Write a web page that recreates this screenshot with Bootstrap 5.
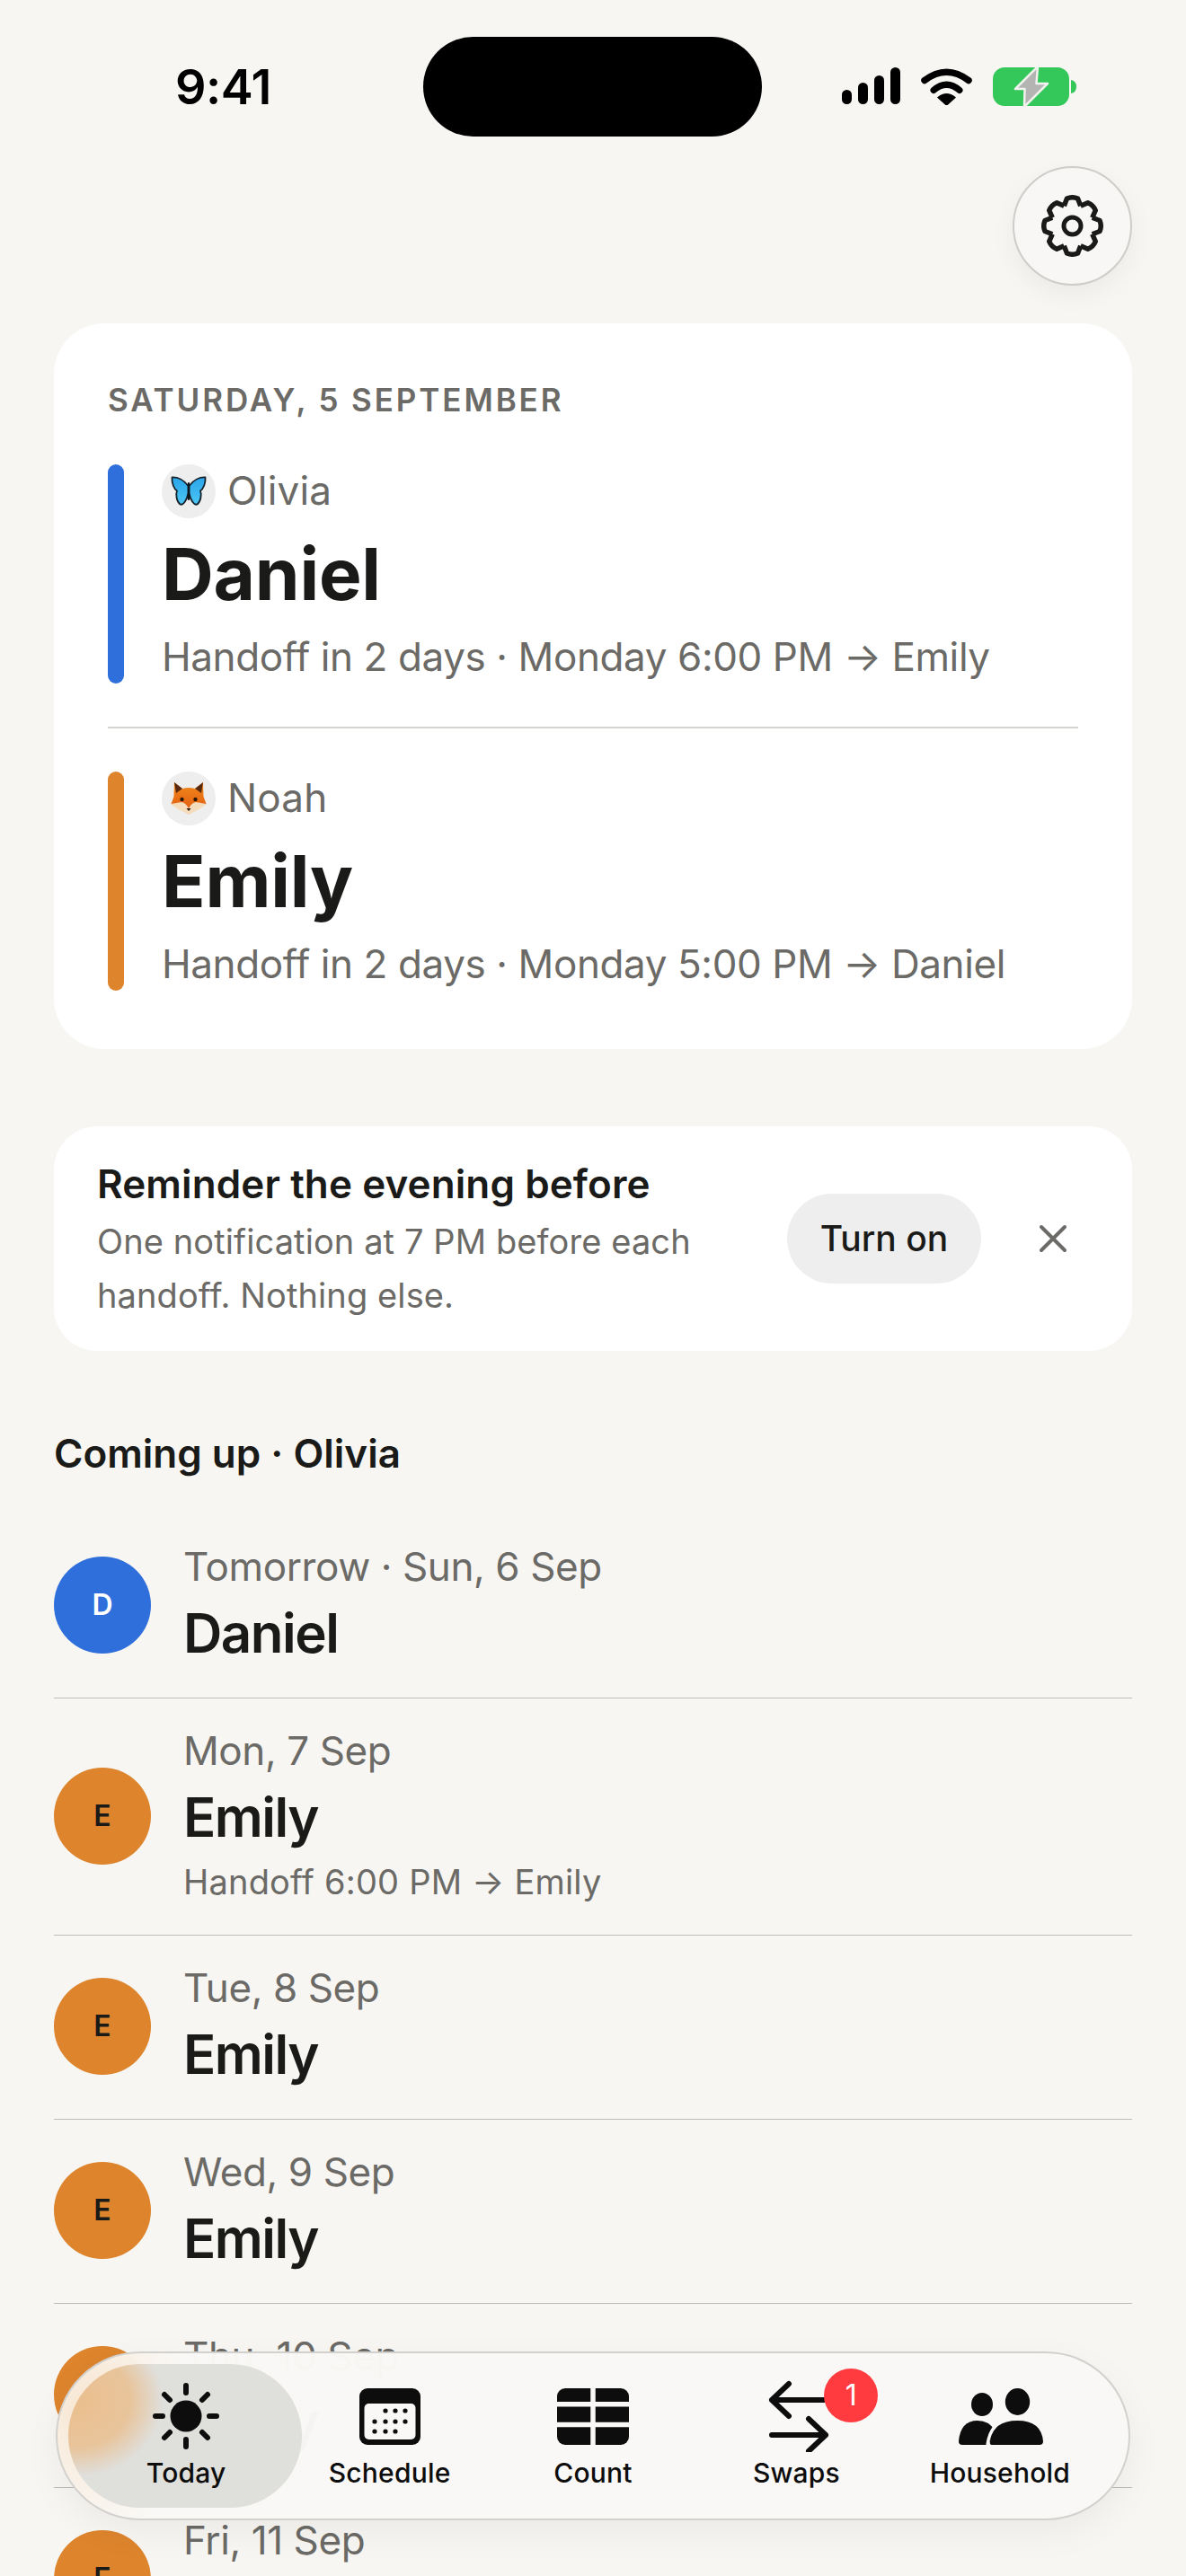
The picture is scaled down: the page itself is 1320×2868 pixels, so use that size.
<!DOCTYPE html>
<html lang="en">
  <head>
    <title>Today</title>
    <meta charset="utf-8" />
    <meta name="viewport" content="width=device-width, initial-scale=1" />
    <link
      href="https://cdn.jsdelivr.net/npm/bootstrap@5.3.3/dist/css/bootstrap.min.css"
      rel="stylesheet"
    />
    <style>
      html, body { height: 2868px; overflow: hidden; }
      body { background: #f7f6f3; color: #1a1a18; font-family: Inter, "Liberation Sans", sans-serif; }
      .phone { position: relative; width: 1320px; height: 2868px; overflow: hidden; padding: 0 60px; }

      /* status bar */
      .status-row { height: 185px; margin: 0 -60px; padding: 41px 122px 0 195px; align-items: flex-start; }
      .clock { width: 276px; font-size: 54px; line-height: 111px; font-weight: 600; color: #000; letter-spacing: -.5px; }
      .island { width: 377px; height: 111px; background: #000; border-radius: 56px; }
      .status-icons { margin-left: 89px; margin-top: 34px; gap: 23px; }

      .gear-row { height: 175px; }
      .gear-btn { width: 133px; height: 133px; padding: 0; background: #f8f7f5; border: 2px solid #cfcdc9; box-shadow: 0 10px 28px rgba(0,0,0,.05); }
      .gear-btn:hover { background: #f8f7f5; border-color: #cfcdc9; }

      /* today card */
      .hero-card { border: 0; border-radius: 56px; background: #fff; padding: 63px 60px 65px; }
      .date-label { font-size: 35px; line-height: 44px; font-weight: 600; letter-spacing: 2.900px; color: #6b6a66; margin-bottom: 50px; }
      .accent-bar { width: 18px; border-radius: 9px; flex: none; margin-right: 42px; }
      .accent-blue { background: #2f6fdb; }
      .accent-orange { background: #dd842d; }
      .kid-avatar { width: 60px; height: 60px; background: #eeeeee; }
      .kid-name { font-size: 44px; line-height: 58px; color: #6b6a66; margin-left: 13px; margin-bottom: 2px; letter-spacing: .2px; }
      .parent-name { font-size: 80px; line-height: 96px; font-weight: 700; letter-spacing: -.2px; margin-top: 14px; }
      .handoff-line { font-size: 44px; line-height: 60px; color: #6b6a66; margin-top: 14px; letter-spacing: -.4px; }
      .hero-divider { margin: 48px 0; border: 0; border-top: 2px solid #d6d5d1; opacity: 1; }

      /* reminder */
      .reminder-card { border: 0; border-radius: 48px; background: #fff; margin-top: 86px; height: 250px; padding: 4px 0 0 48px; }
      .reminder-title { font-size: 44px; line-height: 56px; font-weight: 600; letter-spacing: .1px; }
      .reminder-text { font-size: 38px; line-height: 60px; color: #6b6a66; width: 740px; margin-top: 6px; letter-spacing: .1px; }
      .turn-on { width: 216px; height: 100px; border: 0; border-radius: 50px; background: #eeeeee; color: #1a1a18; font-size: 39px; font-weight: 500; padding: 0; flex: none; margin-top: -4px; }
      .turn-on:hover { background: #eeeeee; color: #1a1a18; }
      .dismiss { width: 32px; height: 32px; padding: 0; border: 0; background: none; margin-left: 64px; margin-right: 72px; margin-top: -4px; line-height: 0; flex: none; }

      /* upcoming */
      .section-title { font-size: 44px; line-height: 56px; font-weight: 600; margin-top: 86px; margin-bottom: 40px; }
      .day-list { background: transparent; }
      .day-item { background: transparent; border-color: #bdbcb8; border-width: 0 0 2px; padding: 30px 0 32px; gap: 36px; color: inherit; }
      .day-avatar { width: 108px; height: 108px; flex: none; color: #1a1a18; font-size: 32px; font-weight: 600; }
      .day-avatar.blue { background: #2f6fdb; color: #fff; }
      .day-avatar.orange { background: #dd842d; }
      .day-date { font-size: 44px; line-height: 56px; color: #6b6a66; letter-spacing: -.4px; }
      .day-name { font-size: 60px; line-height: 80px; font-weight: 600; margin-top: 6px; letter-spacing: -1.500px; }
      .day-note { font-size: 38px; line-height: 53px; color: #6b6a66; margin-top: 6px; letter-spacing: .2px; }

      /* floating tab bar */
      .tab-bar { position: absolute; left: 62px; top: 2618px; width: 1196px; height: 188px; border-radius: 94px; padding: 0 30px;
        background:
          radial-gradient(ellipse 110px 130px at 40px 70px, rgba(245,190,125,.3), rgba(245,190,125,0) 100%),
          rgba(249,248,246,.985);
        border: 2px solid #d2d1cd; box-shadow: 0 14px 40px rgba(0,0,0,.05); }
      .tab-pill { position: absolute; left: 12px; top: 12px; width: 260px; height: 160px; border-radius: 80px;
        background:
          radial-gradient(ellipse 95px 85px at 10px 40px, rgba(238,178,112,.72) 0%, rgba(238,178,112,.6) 62%, rgba(238,178,112,0) 100%),
          #dfdfdc; }
      .tab-link { position: relative; width: 227px; height: 100%; padding: 0; color: #0d0d0d; }
      .tab-link:hover, .tab-link:focus { color: #0d0d0d; }
      .tab-icon { height: 80px; margin-top: 30px; }
      .tab-label { font-size: 30px; line-height: 40px; font-weight: 500; margin-top: 3px; letter-spacing: .2px; }
      .swap-badge { position: absolute; left: 144px; top: 17px; width: 60px; height: 60px; background: #ff3b40; color: #fff; font-size: 32px; font-weight: 400; }
      .swap-icon { margin-left: 5px; }
      .home-icon { margin-left: 3px; }
    </style>
    <script src="https://cdn.jsdelivr.net/npm/bootstrap@5.3.3/dist/js/bootstrap.bundle.min.js"></script>
  </head>
  <body>
    <div class="phone">
      <!-- status bar -->
      <div class="status-row d-flex">
        <div class="clock">9:41</div>
        <div class="island"></div>
        <div class="status-icons d-flex align-items-start">
          <svg width="65" height="42" viewBox="0 0 65 42">
            <rect x="0" y="25" width="11" height="16" rx="5.5" />
            <rect x="18" y="17" width="11" height="24" rx="5.5" />
            <rect x="36" y="9" width="11" height="32" rx="5.5" />
            <rect x="54" y="0" width="11" height="41" rx="5.5" />
          </svg>
          <svg width="57" height="42" viewBox="0 0 57 42">
            <path d="M4 14.5Q28.5 -4 53 14.5" fill="none" stroke="#000" stroke-width="7.5" stroke-linecap="round" />
            <path d="M14 25.5Q28.5 13 43 25.5" fill="none" stroke="#000" stroke-width="7" stroke-linecap="round" />
            <path d="M28.5 42L19 33.5Q28.5 26 38 33.5Z" stroke="#000" stroke-width="1.5" stroke-linejoin="round" />
          </svg>
          <svg width="93" height="44" viewBox="0 0 93 44">
            <rect x="0" y="0" width="85" height="43" rx="13" fill="#34c759" />
            <path d="M87 14Q93 15 93 21.5Q93 28 87 29Z" fill="#34c759" />
            <path d="M50 -1L25 24H35.500L35 44L61 18H48.500Z" fill="#b4b4b2" stroke="#f1f1ee" stroke-width="2.500" stroke-linejoin="round" />
          </svg>
        </div>
      </div>

      <div class="gear-row d-flex justify-content-end align-items-start">
        <button type="button" class="btn gear-btn rounded-circle d-flex align-items-center justify-content-center" aria-label="Settings">
          <svg width="69" height="69" viewBox="-34.500 -34.500 69 69" fill="none" stroke="#1a1a18" stroke-width="5.500" stroke-linejoin="round">
            <defs>
              <path id="gearTooth" d="M-9.200 -22.200L-6 -30.500Q0 -33 6 -30.500L9.200 -22.200" />
            </defs>
            <use href="#gearTooth" />
            <use href="#gearTooth" transform="rotate(45)" />
            <use href="#gearTooth" transform="rotate(90)" />
            <use href="#gearTooth" transform="rotate(135)" />
            <use href="#gearTooth" transform="rotate(180)" />
            <use href="#gearTooth" transform="rotate(225)" />
            <use href="#gearTooth" transform="rotate(270)" />
            <use href="#gearTooth" transform="rotate(315)" />
            <circle r="9.500" stroke-width="5" />
          </svg>
        </button>
      </div>

      <!-- today -->
      <div class="card hero-card">
        <div class="date-label text-uppercase">Saturday, 5 September</div>

        <div class="d-flex">
          <div class="accent-bar accent-blue"></div>
          <div>
            <div class="d-flex align-items-center">
              <div class="kid-avatar rounded-circle d-flex align-items-center justify-content-center">
                <svg width="40" height="34" viewBox="0 0 40 34">
                  <defs>
                    <linearGradient id="wingBlue" x1="0" y1="0" x2="0" y2="1">
                      <stop offset="0" stop-color="#2aa5ea" />
                      <stop offset="1" stop-color="#4cc6f5" />
                    </linearGradient>
                  </defs>
                  <path d="M19.500 11C15 5 8 1 1.500 1.500C1 8 3.500 14 7 16.500C5 21 7 29 10.500 31.500C14 33 18 27 19.500 19Z" fill="url(#wingBlue)" stroke="#14202a" stroke-width="1.800" stroke-linejoin="round" />
                  <path d="M20.500 11C25 5 32 1 38.500 1.500C39 8 36.500 14 33 16.500C35 21 33 29 29.500 31.500C26 33 22 27 20.500 19Z" fill="url(#wingBlue)" stroke="#14202a" stroke-width="1.800" stroke-linejoin="round" />
                  <path d="M20 8V26" stroke="#10161c" stroke-width="2.200" stroke-linecap="round" />
                </svg>
              </div>
              <div class="kid-name">Olivia</div>
            </div>
            <div class="parent-name">Daniel</div>
            <div class="handoff-line">Handoff in 2 days · Monday 6:00 PM → Emily</div>
          </div>
        </div>

        <hr class="hero-divider" />

        <div class="d-flex">
          <div class="accent-bar accent-orange"></div>
          <div>
            <div class="d-flex align-items-center">
              <div class="kid-avatar rounded-circle d-flex align-items-center justify-content-center">
                <svg width="40" height="36" viewBox="0 0 40 36">
                  <defs>
                    <linearGradient id="foxFur" x1="0" y1="0" x2="0" y2="1">
                      <stop offset="0" stop-color="#f08a1c" />
                      <stop offset="1" stop-color="#e2560f" />
                    </linearGradient>
                  </defs>
                  <path d="M4 0L13 7Q20 5 27 7L36 0L36.500 16L39.500 24L20 35.500L.5 24L3.500 16Z" fill="url(#foxFur)" />
                  <path d="M4 0L13 7L6 12Z M36 0L27 7L34 12Z" fill="#5a2a10" />
                  <path d="M.5 24L12 22Q17 23 20 29Q23 23 28 22L39.500 24Q34 30 20 35.500Q6 30 .5 24Z" fill="#f4dcbc" />
                  <circle cx="12.500" cy="19" r="2.200" fill="#2a1608" />
                  <circle cx="27.500" cy="19" r="2.200" fill="#2a1608" />
                  <path d="M17.500 29H22.500L20 32Z" fill="#2a1608" />
                </svg>
              </div>
              <div class="kid-name">Noah</div>
            </div>
            <div class="parent-name">Emily</div>
            <div class="handoff-line">Handoff in 2 days · Monday 5:00 PM → Daniel</div>
          </div>
        </div>
      </div>

      <!-- reminder -->
      <div class="card reminder-card flex-row align-items-center">
        <div class="flex-grow-1">
          <div class="reminder-title">Reminder the evening before</div>
          <div class="reminder-text">One notification at 7 PM before each handoff. Nothing else.</div>
        </div>
        <button type="button" class="btn turn-on">Turn on</button>
        <button type="button" class="btn dismiss" aria-label="Dismiss">
          <svg width="32" height="32" viewBox="0 0 32 32">
            <path d="M3 3L29 29M29 3L3 29" stroke="#6b6a66" stroke-width="4" stroke-linecap="round" />
          </svg>
        </button>
      </div>

      <!-- coming up -->
      <div class="section-title">Coming up · Olivia</div>
      <div class="list-group list-group-flush day-list">
        <div class="list-group-item day-item d-flex align-items-center">
          <div class="day-avatar blue rounded-circle d-flex align-items-center justify-content-center">D</div>
          <div>
            <div class="day-date">Tomorrow · Sun, 6 Sep</div>
            <div class="day-name">Daniel</div>
          </div>
        </div>
        <div class="list-group-item day-item d-flex align-items-center">
          <div class="day-avatar orange rounded-circle d-flex align-items-center justify-content-center">E</div>
          <div>
            <div class="day-date">Mon, 7 Sep</div>
            <div class="day-name">Emily</div>
            <div class="day-note">Handoff 6:00 PM → Emily</div>
          </div>
        </div>
        <div class="list-group-item day-item d-flex align-items-center">
          <div class="day-avatar orange rounded-circle d-flex align-items-center justify-content-center">E</div>
          <div>
            <div class="day-date">Tue, 8 Sep</div>
            <div class="day-name">Emily</div>
          </div>
        </div>
        <div class="list-group-item day-item d-flex align-items-center">
          <div class="day-avatar orange rounded-circle d-flex align-items-center justify-content-center">E</div>
          <div>
            <div class="day-date">Wed, 9 Sep</div>
            <div class="day-name">Emily</div>
          </div>
        </div>
        <div class="list-group-item day-item d-flex align-items-center">
          <div class="day-avatar orange rounded-circle d-flex align-items-center justify-content-center">E</div>
          <div>
            <div class="day-date">Thu, 10 Sep</div>
            <div class="day-name">Emily</div>
          </div>
        </div>
        <div class="list-group-item day-item d-flex align-items-center">
          <div class="day-avatar orange rounded-circle d-flex align-items-center justify-content-center">E</div>
          <div>
            <div class="day-date">Fri, 11 Sep</div>
            <div class="day-name">Emily</div>
          </div>
        </div>
      </div>

      <!-- tab bar -->
      <nav class="tab-bar nav flex-nowrap">
        <div class="tab-pill"></div>
        <a class="nav-link tab-link d-flex flex-column align-items-center" href="#">
          <svg class="tab-icon position-relative" width="76" height="80" viewBox="0 0 76 80">
            <circle cx="38" cy="40" r="17.500" fill="#0d0d0d" />
            <g stroke="#0d0d0d" stroke-width="6" stroke-linecap="round">
              <path d="M38 6V14M38 66V74M4 40H12M64 40H72" />
              <path d="M14 16L20 22M56 58L62 64M62 16L56 22M20 58L14 64" />
            </g>
          </svg>
          <span class="tab-label position-relative">Today</span>
        </a>
        <a class="nav-link tab-link d-flex flex-column align-items-center" href="#">
          <svg class="tab-icon" width="68" height="80" viewBox="0 0 68 80">
            <rect x="0" y="9" width="68" height="63" rx="9" fill="#0d0d0d" />
            <rect x="5.500" y="26" width="57" height="40" rx="5" fill="#f9f8f6" />
            <g fill="#0d0d0d">
              <circle cx="29" cy="34" r="2.600" /><circle cx="40" cy="34" r="2.600" /><circle cx="51" cy="34" r="2.600" />
              <circle cx="17" cy="46" r="2.600" /><circle cx="29" cy="46" r="2.600" /><circle cx="40" cy="46" r="2.600" /><circle cx="51" cy="46" r="2.600" />
              <circle cx="17" cy="57" r="2.600" /><circle cx="29" cy="57" r="2.600" /><circle cx="40" cy="57" r="2.600" />
            </g>
          </svg>
          <span class="tab-label">Schedule</span>
        </a>
        <a class="nav-link tab-link d-flex flex-column align-items-center" href="#">
          <svg class="tab-icon" width="80" height="80" viewBox="0 0 80 80">
            <rect x="0" y="9" width="80" height="63" rx="9" fill="#0d0d0d" />
            <path d="M0 26.800H80M0 49.500H80M40 9V72" stroke="#f9f8f6" stroke-width="5.500" />
          </svg>
          <span class="tab-label">Count</span>
        </a>
        <a class="nav-link tab-link d-flex flex-column align-items-center" href="#">
          <svg class="tab-icon swap-icon" width="68" height="80" viewBox="0 0 68 80" fill="none" stroke="#0d0d0d" stroke-width="6" stroke-linecap="round" stroke-linejoin="round">
            <path d="M4 22H62M23 4L4 22L23 40" />
            <path d="M4 61H64M45 43L64 61L45 79" />
          </svg>
          <span class="tab-label">Swaps</span>
          <span class="swap-badge rounded-circle d-flex align-items-center justify-content-center">1</span>
        </a>
        <a class="nav-link tab-link d-flex flex-column align-items-center" href="#">
          <svg class="tab-icon home-icon" width="94" height="80" viewBox="0 0 94 80">
            <ellipse cx="26" cy="27" rx="12" ry="13" fill="#0d0d0d" />
            <ellipse cx="65.500" cy="24" rx="13.700" ry="15" fill="#0d0d0d" />
            <path d="M0 68Q2 45 21 45Q34 45 40 56L33 72H4Q0 72 0 68Z" fill="#0d0d0d" />
            <path d="M37 72Q34 72 35 68Q38 45 65.500 45Q92 45 94 68Q94 72 90 72Z" fill="#0d0d0d" />
            <path d="M41 51Q34 58 32 72" fill="none" stroke="#f9f8f6" stroke-width="3.500" />
          </svg>
          <span class="tab-label">Household</span>
        </a>
      </nav>
    </div>
  </body>
</html>
